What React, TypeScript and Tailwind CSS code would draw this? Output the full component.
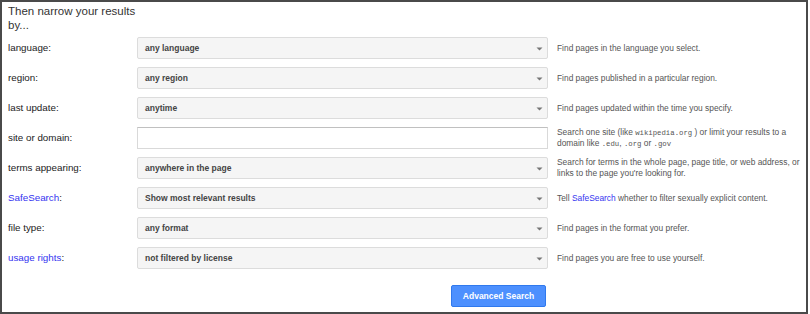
import React from "react";

const Arrow = () => (
  <svg width="7" height="4" viewBox="0 0 7 4" className="absolute right-[4px] top-[9px]">
    <path d="M0.5 0.5 L6.5 0.5 L3.5 3.5 Z" fill="#777" />
  </svg>
);

const Select = ({ value }: { value: string }) => (
  <div className="relative w-[411px] h-[22px] shrink-0 rounded-[2px] border border-[#dcdcdc] bg-[#f5f5f5] pl-[7px] flex items-center text-[8.5px] font-bold text-[#444]">
    {value}
    <Arrow />
  </div>
);

const Row = ({
  label,
  link,
  control,
  desc,
}: {
  label: string;
  link?: boolean;
  control: React.ReactNode;
  desc: React.ReactNode;
}) => (
  <div className="flex items-center h-[30px]">
    <div className={`w-[129px] shrink-0 text-[9.8px] ${link ? "text-[#3535f0]" : "text-[#222]"}`}>
      {link ? (
        <>
          <span className="text-[#3535f0]">{label}</span>
          <span className="text-[#222]">:</span>
        </>
      ) : (
        label
      )}
    </div>
    {control}
    <div className="ml-[9px] w-[250px] text-[8.4px] leading-[11px] text-[#555]">{desc}</div>
  </div>
);

const mono = "font-['Liberation_Mono',monospace] text-[7.3px] leading-none";

export default function App() {
  return (
    <div
      className="w-[808px] h-[314px] border-2 border-[#4a4a4a] bg-white pl-[6px] text-[#222]"
      style={{ fontFamily: "'Liberation Sans', Arial, sans-serif" }}
    >
      <div className="w-[140px] h-[31px] pt-[2px] text-[11.5px] leading-[14px] text-[#333]">
        Then narrow your results by...
      </div>
      <Row label="language:" control={<Select value="any language" />} desc="Find pages in the language you select." />
      <Row label="region:" control={<Select value="any region" />} desc="Find pages published in a particular region." />
      <Row label="last update:" control={<Select value="anytime" />} desc="Find pages updated within the time you specify." />
      <Row
        label="site or domain:"
        control={<div className="w-[411px] h-[22px] shrink-0 border border-[#d9d9d9] border-t-[#c0c0c0] bg-white" />}
        desc={
          <>
            Search one site (like <span className={mono}>wikipedia.org</span> ) or limit your results to a domain like{" "}
            <span className={mono}>.edu</span>, <span className={mono}>.org</span> or <span className={mono}>.gov</span>
          </>
        }
      />
      <Row
        label="terms appearing:"
        control={<Select value="anywhere in the page" />}
        desc="Search for terms in the whole page, page title, or web address, or links to the page you're looking for."
      />
      <Row
        label="SafeSearch"
        link
        control={<Select value="Show most relevant results" />}
        desc={
          <>
            Tell <span className="text-[#3535f0]">SafeSearch</span> whether to filter sexually explicit content.
          </>
        }
      />
      <Row label="file type:" control={<Select value="any format" />} desc="Find pages in the format you prefer." />
      <Row label="usage rights" link control={<Select value="not filtered by license" />} desc="Find pages you are free to use yourself." />
      <div className="flex mt-[12px] w-[538px] justify-end">
        <button className="w-[95px] h-[22px] rounded-[2px] border border-[#3079ed] bg-[#4d90fe] text-white text-[8.5px] font-bold">
          Advanced Search
        </button>
      </div>
    </div>
  );
}
